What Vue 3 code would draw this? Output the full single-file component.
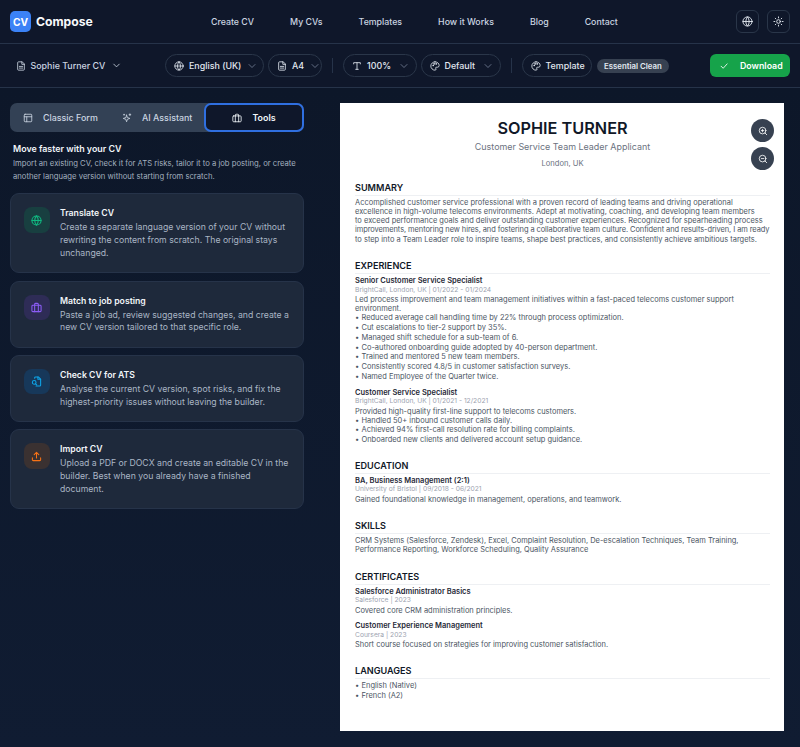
<script setup>
const navLinks = ['Create CV', 'My CVs', 'Templates', 'How it Works', 'Blog', 'Contact']

const tools = [
  {
    title: 'Translate CV',
    text: 'Create a separate language version of your CV without rewriting the content from scratch. The original stays unchanged.',
    tone: 'green',
    icon: 'globe'
  },
  {
    title: 'Match to job posting',
    text: 'Paste a job ad, review suggested changes, and create a new CV version tailored to that specific role.',
    tone: 'purple',
    icon: 'case'
  },
  {
    title: 'Check CV for ATS',
    text: 'Analyse the current CV version, spot risks, and fix the highest-priority issues without leaving the builder.',
    tone: 'blue',
    icon: 'scan'
  },
  {
    title: 'Import CV',
    text: 'Upload a PDF or DOCX and create an editable CV in the builder. Best when you already have a finished document.',
    tone: 'orange',
    icon: 'upload'
  }
]

const summaryLines = [
  'Accomplished customer service professional with a proven record of leading teams and driving operational',
  'excellence in high-volume telecoms environments. Adept at motivating, coaching, and developing team members',
  'to exceed performance goals and deliver outstanding customer experiences. Recognized for spearheading process',
  'improvements, mentoring new hires, and fostering a collaborative team culture. Confident and results-driven, I am ready',
  'to step into a Team Leader role to inspire teams, shape best practices, and consistently achieve ambitious targets.'
]

const jobs = [
  {
    title: 'Senior Customer Service Specialist',
    meta: 'BrightCall, London, UK | 01/2022 - 01/2024',
    text: 'Led process improvement and team management initiatives within a fast-paced telecoms customer support environment.',
    bullets: [
      'Reduced average call handling time by 22% through process optimization.',
      'Cut escalations to tier-2 support by 35%.',
      'Managed shift schedule for a sub-team of 6.',
      'Co-authored onboarding guide adopted by 40-person department.',
      'Trained and mentored 5 new team members.',
      'Consistently scored 4.8/5 in customer satisfaction surveys.',
      'Named Employee of the Quarter twice.'
    ]
  },
  {
    title: 'Customer Service Specialist',
    meta: 'BrightCall, London, UK | 01/2021 - 12/2021',
    text: 'Provided high-quality first-line support to telecoms customers.',
    bullets: [
      'Handled 50+ inbound customer calls daily.',
      'Achieved 94% first-call resolution rate for billing complaints.',
      'Onboarded new clients and delivered account setup guidance.'
    ]
  }
]

const certs = [
  { title: 'Salesforce Administrator Basics', meta: 'Salesforce | 2023', text: 'Covered core CRM administration principles.' },
  { title: 'Customer Experience Management', meta: 'Coursera | 2023', text: 'Short course focused on strategies for improving customer satisfaction.' }
]
</script>

<template>
  <div class="page">
    <header class="topbar">
      <div class="brand">
        <span class="logo">CV</span>
        <span class="brand-name">Compose</span>
      </div>
      <nav class="nav">
        <a v-for="link in navLinks" :key="link">{{ link }}</a>
      </nav>
      <div class="top-actions">
        <button class="square-btn">
          <svg viewBox="0 0 24 24" class="ic11"><circle cx="12" cy="12" r="10" /><path d="M2 12h20M12 2a15 15 0 0 1 0 20a15 15 0 0 1 0-20" /></svg>
        </button>
        <button class="square-btn">
          <svg viewBox="0 0 24 24" class="ic11"><circle cx="12" cy="12" r="4" /><path d="M12 2v2M12 20v2M4.900 4.900l1.400 1.400M17.700 17.700l1.400 1.400M2 12h2M20 12h2M4.900 19.100l1.400-1.400M17.700 6.300l1.400-1.400" /></svg>
        </button>
      </div>
    </header>

    <div class="toolbar">
      <div class="doc-name">
        <svg viewBox="0 0 24 24" class="ic10"><path d="M14 2H6a2 2 0 0 0-2 2v16a2 2 0 0 0 2 2h12a2 2 0 0 0 2-2V8z" /><path d="M14 2v6h6M8 13h8M8 17h8" /></svg>
        <span>Sophie Turner CV</span>
        <svg viewBox="0 0 24 24" class="chev strong"><path d="m6 9 6 6 6-6" /></svg>
      </div>
      <div class="pill pill-lang">
        <svg viewBox="0 0 24 24" class="ic10"><circle cx="12" cy="12" r="10" /><path d="M2 12h20M12 2a15 15 0 0 1 0 20a15 15 0 0 1 0-20" /></svg>
        <span>English (UK)</span>
        <svg viewBox="0 0 24 24" class="chev"><path d="m6 9 6 6 6-6" /></svg>
      </div>
      <div class="pill pill-size">
        <svg viewBox="0 0 24 24" class="ic10"><path d="M14 2H6a2 2 0 0 0-2 2v16a2 2 0 0 0 2 2h12a2 2 0 0 0 2-2V8z" /><path d="M14 2v6h6M8 13h8M8 17h8" /></svg>
        <span>A4</span>
        <svg viewBox="0 0 24 24" class="chev"><path d="m6 9 6 6 6-6" /></svg>
      </div>
      <i class="divider"></i>
      <div class="pill pill-zoom">
        <svg viewBox="0 0 24 24" class="ic10"><path d="M4 7V4h16v3M9 20h6M12 4v16" /></svg>
        <span>100%</span>
        <svg viewBox="0 0 24 24" class="chev"><path d="m6 9 6 6 6-6" /></svg>
      </div>
      <div class="pill pill-theme">
        <svg viewBox="0 0 24 24" class="ic10"><path d="M12 2a10 10 0 0 0 0 20c1.500 0 2.500-1 2.500-2.300c0-.7-.3-1.100-.6-1.500c-.3-.4-.6-.8-.6-1.400c0-1.100 1-1.800 2-1.800h2.200A4.500 4.500 0 0 0 22 10.500C22 5.800 17.500 2 12 2z" /><circle cx="7.500" cy="11" r="1" /><circle cx="9.500" cy="7" r="1" /><circle cx="14.500" cy="7" r="1" /></svg>
        <span>Default</span>
        <svg viewBox="0 0 24 24" class="chev"><path d="m6 9 6 6 6-6" /></svg>
      </div>
      <i class="divider"></i>
      <div class="pill pill-template">
        <svg viewBox="0 0 24 24" class="ic10"><path d="M12 2a10 10 0 0 0 0 20c1.500 0 2.500-1 2.500-2.300c0-.7-.3-1.100-.6-1.500c-.3-.4-.6-.8-.6-1.400c0-1.100 1-1.800 2-1.800h2.200A4.500 4.500 0 0 0 22 10.500C22 5.800 17.500 2 12 2z" /><circle cx="7.500" cy="11" r="1" /><circle cx="9.500" cy="7" r="1" /><circle cx="14.500" cy="7" r="1" /></svg>
        <span>Template</span>
      </div>
      <span class="badge">Essential Clean</span>
      <button class="download">
        <svg viewBox="0 0 24 24" class="ic10"><path d="M5 12.500 10 17.500 19.500 7" /></svg>
        <span>Download</span>
      </button>
    </div>

    <main class="workspace">
      <aside class="side">
        <div class="tabs">
          <div class="tab tab-form">
            <svg viewBox="0 0 24 24" class="ic10"><rect x="3" y="3" width="18" height="18" rx="2" /><path d="M3 9h18M9 21V9" /></svg>
            <span>Classic Form</span>
          </div>
          <div class="tab tab-ai">
            <svg viewBox="0 0 24 24" class="ic10"><path d="M11 5 13 11 19 13 13 15 11 21 9 15 3 13 9 11z" /><path d="M19 2v4M17 4h4M5 3v2M4 4h2" /></svg>
            <span>AI Assistant</span>
          </div>
          <div class="tab tab-active">
            <svg viewBox="0 0 24 24" class="ic10"><rect x="2" y="7" width="20" height="14" rx="2" /><path d="M16 7V5a2 2 0 0 0-2-2h-4a2 2 0 0 0-2 2v2M8 7v14M16 7v14" /></svg>
            <span>Tools</span>
          </div>
        </div>

        <h2 class="side-title">Move faster with your CV</h2>
        <p class="side-text">Import an existing CV, check it for ATS risks, tailor it to a job posting, or create another language version without starting from scratch.</p>

        <section v-for="tool in tools" :key="tool.title" class="tool-card">
          <div class="tool-icon" :class="tool.tone">
            <svg v-if="tool.icon === 'globe'" viewBox="0 0 24 24"><circle cx="12" cy="12" r="10" /><path d="M2 12h20M12 2a15 15 0 0 1 0 20a15 15 0 0 1 0-20" /></svg>
            <svg v-else-if="tool.icon === 'case'" viewBox="0 0 24 24"><rect x="2" y="7" width="20" height="14" rx="2" /><path d="M16 7V5a2 2 0 0 0-2-2h-4a2 2 0 0 0-2 2v2M8 7v14M16 7v14" /></svg>
            <svg v-else-if="tool.icon === 'scan'" viewBox="0 0 24 24"><path d="M8 5V4a2 2 0 0 1 2-2h6l5 5v13a2 2 0 0 1-2 2h-8" /><path d="M15 2v5h6" /><circle cx="7" cy="14" r="4" /><path d="m10 17 2.500 2.500" /></svg>
            <svg v-else viewBox="0 0 24 24"><path d="M21 15v4a2 2 0 0 1-2 2H5a2 2 0 0 1-2-2v-4M17 8l-5-5-5 5M12 3v12" /></svg>
          </div>
          <div class="tool-body">
            <h3>{{ tool.title }}</h3>
            <p>{{ tool.text }}</p>
          </div>
        </section>
      </aside>

      <div class="preview">
        <article class="paper">
          <div class="zoom-btns">
            <button>
              <svg viewBox="0 0 24 24"><circle cx="11" cy="11" r="8" /><path d="m21 21-4.300-4.300M11 8v6M8 11h6" /></svg>
            </button>
            <button>
              <svg viewBox="0 0 24 24"><circle cx="11" cy="11" r="8" /><path d="m21 21-4.300-4.300M8 11h6" /></svg>
            </button>
          </div>

          <div class="cv-head">
            <h1>SOPHIE TURNER</h1>
            <p class="cv-role">Customer Service Team Leader Applicant</p>
            <p class="cv-loc">London, UK</p>
          </div>

          <section class="cv-sec sec-summary">
            <h4>SUMMARY</h4>
            <p class="cv-p summary">
              <span v-for="line in summaryLines" :key="line">{{ line }}</span>
            </p>
          </section>

          <section class="cv-sec sec-exp">
            <h4>EXPERIENCE</h4>
            <div v-for="job in jobs" :key="job.title" class="cv-item">
              <div class="cv-title">{{ job.title }}</div>
              <div class="cv-meta">{{ job.meta }}</div>
              <p class="cv-p">{{ job.text }}</p>
              <ul>
                <li v-for="b in job.bullets" :key="b">{{ b }}</li>
              </ul>
            </div>
          </section>

          <section class="cv-sec sec-edu">
            <h4>EDUCATION</h4>
            <div class="cv-title">BA, Business Management (2:1)</div>
            <div class="cv-meta">University of Bristol | 09/2018 - 06/2021</div>
            <p class="cv-p">Gained foundational knowledge in management, operations, and teamwork.</p>
          </section>

          <section class="cv-sec sec-skills">
            <h4>SKILLS</h4>
            <p class="cv-p">CRM Systems (Salesforce, Zendesk), Excel, Complaint Resolution, De-escalation Techniques, Team Training, Performance Reporting, Workforce Scheduling, Quality Assurance</p>
          </section>

          <section class="cv-sec sec-certs">
            <h4>CERTIFICATES</h4>
            <div v-for="c in certs" :key="c.title" class="cv-item">
              <div class="cv-title">{{ c.title }}</div>
              <div class="cv-meta">{{ c.meta }}</div>
              <p class="cv-p">{{ c.text }}</p>
            </div>
          </section>

          <section class="cv-sec sec-langs">
            <h4>LANGUAGES</h4>
            <ul>
              <li>English (Native)</li>
              <li>French (A2)</li>
            </ul>
          </section>
        </article>
      </div>
    </main>
  </div>
</template>

<style>
html, body { margin: 0; background: #0f172a; }
</style>

<style scoped>
* { box-sizing: border-box; }
svg { fill: none; stroke: currentColor; stroke-width: 2; stroke-linecap: round; stroke-linejoin: round; flex: none; }
h1, h2, h3, h4, p, ul { margin: 0; padding: 0; }
button { font-family: inherit; border: 0; padding: 0; }

.page {
  width: 800px;
  height: 747px;
  overflow: hidden;
  display: flex;
  flex-direction: column;
  font-family: Inter, "Liberation Sans", sans-serif;
  background: #0f172a;
  color: #e2e8f0;
}
.ic10 { width: 10px; height: 10px; }
.ic11 { width: 11px; height: 11px; }
.chev { width: 12px; height: 12px; color: #7d8aa0; margin-left: auto; margin-right: -2px; stroke-width: 1.500; }
.chev.strong { width: 11px; height: 11px; color: #cbd5e1; margin-left: 1px; stroke-width: 1.800; }

.topbar {
  height: 44px;
  flex: none;
  display: flex;
  align-items: center;
  padding: 0 10px;
  border-bottom: 1px solid #263349;
}
.brand { display: flex; align-items: center; gap: 5px; width: 190px; }
.logo {
  width: 21px;
  height: 21px;
  border-radius: 5px;
  background: #3b82f6;
  color: #fff;
  font-size: 10.200px;
  font-weight: 700;
  display: flex;
  align-items: center;
  justify-content: center;
}
.brand-name { font-size: 12.200px; font-weight: 700; color: #f8fafc; }
.nav { display: flex; gap: 36px; font-size: 8.800px; font-weight: 500; color: #cbd5e1; margin-left: 11px; }
.top-actions { margin-left: auto; display: flex; gap: 7.500px; }
.square-btn {
  width: 23.500px;
  height: 23.500px;
  border-radius: 6px;
  border: 1px solid #2a3649;
  background: transparent;
  color: #e2e8f0;
  display: flex;
  align-items: center;
  justify-content: center;
}

.toolbar {
  height: 44px;
  flex: none;
  display: flex;
  align-items: center;
  padding: 0 10px 0 16px;
  border-bottom: 1px solid #263349;
  font-size: 8.900px;
  font-weight: 500;
  color: #e2e8f0;
  white-space: nowrap;
}
.doc-name { display: flex; align-items: center; gap: 4.500px; width: 149px; color: #cbd5e1; }
.pill {
  height: 23px;
  display: flex;
  align-items: center;
  gap: 5px;
  padding: 0 8px;
  border: 1px solid #2a3649;
  border-radius: 12px;
}
.pill-lang { width: 99px; margin-right: 4px; }
.pill-size { width: 54px; }
.pill-zoom { width: 73.500px; margin-right: 4px; }
.pill-theme { width: 80px; }
.pill-template { width: 70.500px; }
.divider { width: 1px; height: 15px; background: #263349; margin: 0 10px; }
.badge {
  margin-left: 5px;
  height: 14px;
  padding: 0 7px;
  border-radius: 7px;
  background: #374151;
  font-size: 7.800px;
  font-weight: 600;
  line-height: 14px;
  color: #e2e8f0;
}
.download {
  margin-left: auto;
  width: 80px;
  height: 23px;
  border-radius: 6px;
  background: #16a34a;
  color: #fff;
  font-size: 8.800px;
  font-weight: 600;
  display: flex;
  align-items: center;
  padding-left: 9px;
  gap: 11px;
}

.workspace {
  flex: 1;
  display: flex;
  padding: 15px 16px 0 10px;
  background: linear-gradient(180deg, #0d1729, #101c32);
}
.side { width: 294px; flex: none; }
.tabs {
  height: 29px;
  display: flex;
  align-items: stretch;
  background: #334155;
  border-radius: 7px;
  font-size: 8.900px;
  font-weight: 500;
  color: #cbd5e1;
}
.tab { display: flex; align-items: center; gap: 10px; }
.tab-form { width: 98px; padding-left: 13px; }
.tab-ai { width: 96px; padding-left: 14px; }
.tab-active {
  flex: 1;
  justify-content: center;
  background: #0f172a;
  border: 2px solid #2f6fe0;
  border-radius: 7px;
  color: #f1f5f9;
  font-weight: 600;
}
.side-title { margin: 10px 0 0 3px; font-size: 8.900px; font-weight: 600; line-height: 13px; color: #f1f5f9; }
.side-text { margin: 3px 0 10px 3px; font-size: 7.700px; line-height: 12.700px; color: #a3afbf; }

.tool-card {
  display: flex;
  gap: 10.500px;
  padding: 13px 13px 12.600px;
  margin-bottom: 7.400px;
  background: #1e293b;
  border: 1px solid #263349;
  border-radius: 9px;
}
.tool-icon {
  width: 25.500px;
  height: 25.500px;
  border-radius: 8px;
  flex: none;
  display: flex;
  align-items: center;
  justify-content: center;
}
.tool-icon svg { width: 11px; height: 11px; stroke-width: 2.300; }
.tool-icon.green { background: #183f40; color: #10b981; }
.tool-icon.purple { background: #2e2c56; color: #8b5cf6; }
.tool-icon.blue { background: #17385a; color: #0ea5e9; }
.tool-icon.orange { background: #3a3131; color: #f97316; }
.tool-body h3 { font-size: 8.700px; font-weight: 600; line-height: 12px; margin-bottom: 2px; color: #f1f5f9; }
.tool-body p { font-size: 8.700px; line-height: 12.700px; color: #aab6c5; }

.preview { margin-left: 36px; flex: 1; }
.paper {
  position: relative;
  height: 628px;
  padding: 15px 14px 0 15px;
  background: #fff;
  color: #4b5563;
}
.zoom-btns { position: absolute; top: 16px; right: 10px; display: flex; flex-direction: column; gap: 5px; }
.zoom-btns button {
  width: 23px;
  height: 23px;
  border-radius: 50%;
  background: #374151;
  color: #fff;
  display: flex;
  align-items: center;
  justify-content: center;
}
.zoom-btns svg { width: 10px; height: 10px; }

.cv-head { text-align: center; }
.cv-head h1 { font-size: 16.250px; font-weight: 600; line-height: 20px; color: #111827; }
.cv-role { font-size: 8.940px; line-height: 15px; margin-top: 1px; color: #6b7280; }
.cv-loc { font-size: 7.600px; line-height: 12px; margin-top: 4px; color: #6b7280; }

.cv-sec h4 {
  font-size: 9.100px;
  font-weight: 600;
  line-height: 12px;
  color: #111827;
  padding-bottom: 1px;
  border-bottom: 1px solid #eef0f3;
  margin-bottom: 2.200px;
}
.sec-summary { margin-top: 12px; }
.sec-exp { margin-top: 16.500px; }
.sec-edu { margin-top: 14.700px; }
.sec-skills { margin-top: 16px; }
.sec-certs { margin-top: 16.500px; }
.sec-langs { margin-top: 15.500px; }
.sec-langs ul { margin-top: 1px; }
.cv-p { font-size: 7.480px; line-height: 9.100px; color: #4b5563; }
.summary span { display: block; white-space: nowrap; }
.summary span:nth-child(4) { letter-spacing: -0.08px; }
.cv-title { font-size: 7.500px; font-weight: 600; line-height: 9.500px; color: #1f2937; }
.cv-meta { font-size: 6.700px; line-height: 9px; margin-bottom: 0.400px; color: #9ca3af; }
.cv-item { margin-bottom: 6.400px; }
ul { list-style: none; }
li { font-size: 7.480px; line-height: 9.700px; color: #4b5563; padding-left: 6.500px; position: relative; }
li::before { content: "•"; position: absolute; left: 0; }
</style>
